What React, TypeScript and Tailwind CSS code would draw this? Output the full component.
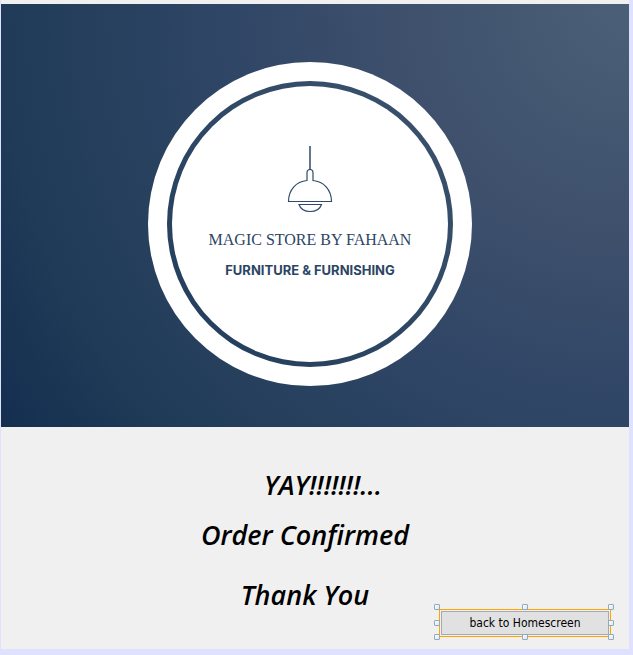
function LampIcon() {
  return (
    <svg
      width="46"
      height="68"
      viewBox="0 0 46 68"
      fill="none"
      stroke="#304968"
      strokeWidth="1.2"
      aria-hidden="true"
    >
      <path d="M23 0V24" strokeWidth="1.5" />
      <path d="M1.5 55.500C1.5 44 9 35.5 20 34.5V27Q20 23.500 23 23.500T26 27V34.500C37 35.500 44.500 44 44.500 55.500Z" />
      <path d="M12 58.500H34.500C33 63 29 65.500 23.200 65.500S13.500 63 12 58.500Z" />
    </svg>
  );
}

function Logo() {
  return (
    <div className="flex size-[324px] items-center justify-center rounded-full bg-white">
      <div className="size-[286px] rounded-full bg-linear-to-tr from-[#213c5b] to-[#3c536e] p-[5px]">
        <div className="flex size-full flex-col items-center rounded-full bg-white pt-[60px] text-[#2c4564]">
          <LampIcon />
          <h1 className="mt-4 font-['Liberation_Serif',serif] text-[16px] leading-5 whitespace-nowrap">
            MAGIC STORE BY FAHAAN
          </h1>
          <p className="mt-2.5 font-['Inter',sans-serif] text-[13px] leading-5 font-bold whitespace-nowrap">
            FURNITURE &amp; FURNISHING
          </p>
        </div>
      </div>
    </div>
  );
}

const handles = [
  "-top-1.5 -left-1.5",
  "-top-1.5 left-1/2 -translate-x-1/2",
  "-top-1.5 -right-1",
  "top-1/2 -left-1.5 -translate-y-1/2",
  "top-1/2 -right-1 -translate-y-1/2",
  "-bottom-1 -left-1.5",
  "-bottom-1 left-1/2 -translate-x-1/2",
  "-bottom-1 -right-1",
];

function HomeButton() {
  return (
    <div className="relative border border-[#ffa500] p-px">
      <button
        type="button"
        className="block h-6 w-[168px] border border-[#a9a9a9] bg-[#e1e1e1] font-['DejaVu_Sans_Condensed','DejaVu_Sans',sans-serif] text-[12px] leading-5 text-black"
      >
        back to Homescreen
      </button>
      {handles.map((place) => (
        <span
          key={place}
          className={`absolute size-1.5 rounded-[1px] border border-[#91aabd] bg-linear-to-br from-white to-[#dce6f0] ${place}`}
        />
      ))}
    </div>
  );
}

export default function App() {
  return (
    <div className="min-h-screen bg-[#e0e0ff] pr-1 pb-1.5 pl-px">
      <main className="bg-[#f0f0f0] pt-1">
        <header className="flex justify-center bg-[radial-gradient(circle_farthest-corner_at_top_right,#4b6078_0%,#3e506c_30%,#304666_53%,#1f3b57_83%,#142e50_100%)] pt-[58px] pr-2.5 pb-[41px]">
          <Logo />
        </header>
        <section className="flex flex-col items-center pt-10 pr-5 font-['Segoe_Print','Open_Sans',sans-serif] text-[27px] leading-9 font-semibold text-black italic">
          <p className="pl-9">YAY!!!!!!!...</p>
          <p className="mt-3.5">Order Confirmed</p>
          <p className="mt-6">Thank You</p>
        </section>
        <footer className="-mt-1 flex justify-end pr-[18px] pb-3">
          <HomeButton />
        </footer>
      </main>
    </div>
  );
}
